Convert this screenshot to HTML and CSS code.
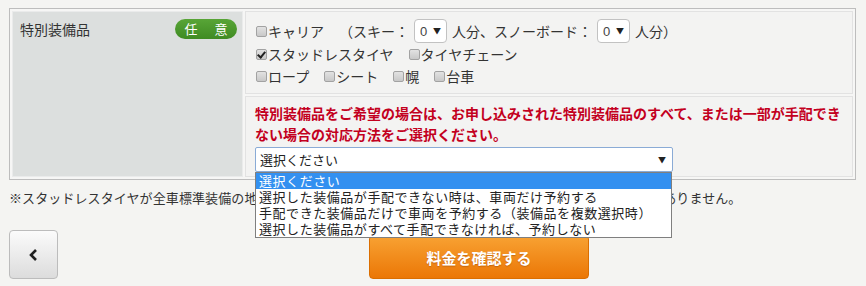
FILE: index.html
```html
<!DOCTYPE html>
<html lang="ja">
<head>
<meta charset="utf-8">
<title>特別装備品</title>
<link rel="stylesheet" href="styles.css">
</head>
<body>
<div class="page">
  <div class="form-table">
    <div class="th">
      <span class="th-label">特別装備品</span>
      <span class="badge">任　意</span>
    </div>
    <div class="td">
      <div class="cell cell-options">
        <div class="opt-row first">
          <label class="opt"><input type="checkbox">キャリア</label>
          <span class="txt">（スキー：</span>
          <span class="mini-select"><select><option>0</option><option>1</option><option>2</option></select><span class="arrow">▼</span></span>
          <span class="txt">人分、スノーボード：</span>
          <span class="mini-select"><select><option>0</option><option>1</option><option>2</option></select><span class="arrow">▼</span></span>
          <span class="txt">人分）</span>
        </div>
        <div class="opt-row">
          <label class="opt"><input type="checkbox" checked>スタッドレスタイヤ</label>
          <label class="opt"><input type="checkbox">タイヤチェーン</label>
        </div>
        <div class="opt-row">
          <label class="opt"><input type="checkbox">ロープ</label>
          <label class="opt"><input type="checkbox">シート</label>
          <label class="opt"><input type="checkbox">幌</label>
          <label class="opt"><input type="checkbox">台車</label>
        </div>
      </div>
      <div class="cell cell-note">
        <p class="warn">特別装備品をご希望の場合は、お申し込みされた特別装備品のすべて、または一部が手配できない場合の対応方法をご選択ください。</p>
        <div class="big-select">
          <select>
            <option>選択ください</option>
          </select>
          <span class="arrow big-arrow">▼</span>
          <ul class="listbox" role="listbox">
            <li class="selected">選択ください</li>
            <li>選択した装備品が手配できない時は、車両だけ予約する</li>
            <li>手配できた装備品だけで車両を予約する（装備品を複数選択時）</li>
            <li>選択した装備品がすべて手配できなければ、予約しない</li>
          </ul>
        </div>
      </div>
    </div>
  </div>
  <p class="footnote">※スタッドレスタイヤが全車標準装備の地域・期間中は、スタッドレスタイヤを別途お申し込みいただく必要はありません。</p>
  <div class="actions">
    <button class="btn-back" type="button" aria-label="戻る">
      <svg width="12" height="14" viewBox="0 0 12 14"><polyline points="8,2 3,7 8,12" fill="none" stroke="#222" stroke-width="2.6"/></svg>
    </button>
    <button class="btn-primary" type="button">料金を確認する</button>
  </div>
</div>
</body>
</html>
```

FILE: styles.css
```css
body {
  margin: 0;
  background: #f4f4f2;
  font-family: "Noto Sans CJK JP", sans-serif;
  color: #333;
}

.page {
  padding: 8px 10px 0 9px;
}

.form-table {
  display: grid;
  grid-template-columns: 231px 1fr;
  column-gap: 2px;
  border: 1px solid #bdbdbd;
  padding: 2px;
  background: #f6f6f5;
}

.th {
  background: #dcdfde;
  border: 1px solid #eaebeb;
  padding: 7px 5px 0 7px;
  display: flex;
  justify-content: space-between;
  align-items: flex-start;
}

.th-label {
  font-size: 14px;
  line-height: 20px;
  color: #333;
}

.badge {
  width: 62px;
  height: 20px;
  border-radius: 10px;
  background: linear-gradient(#58a537, #3f8b22);
  color: #fff;
  font-size: 13px;
  line-height: 20px;
  text-align: center;
  letter-spacing: 2px;
  text-indent: 2px;
}

.td {
  display: flex;
  flex-direction: column;
  gap: 2px;
}

.cell {
  background: #f3f3f2;
  border: 1px solid #e2e2e2;
}

.cell-options {
  padding: 7px 4px 6px 10px;
}

.opt-row {
  display: flex;
  align-items: center;
  height: 22px;
  font-size: 14px;
  white-space: nowrap;
  color: #333;
}

.opt-row.first {
  height: 24px;
}

.opt {
  display: inline-flex;
  align-items: center;
  margin-right: 15px;
}

.opt input {
  appearance: none;
  -webkit-appearance: none;
  width: 11px;
  height: 11px;
  margin: 0 1px 0 0;
  border: 1px solid #a2a2a2;
  border-radius: 2px;
  background: linear-gradient(#e2e2e2, #c8c8c8);
  position: relative;
  flex: none;
}

.opt input:checked::after {
  content: "";
  position: absolute;
  left: 2px;
  top: 0;
  width: 3px;
  height: 6px;
  border: solid #222;
  border-width: 0 2px 2px 0;
  transform: rotate(40deg);
}

.txt {
  margin-right: 5px;
}

.mini-select {
  position: relative;
  display: inline-block;
  margin-right: 5px;
}

.mini-select select {
  appearance: none;
  -webkit-appearance: none;
  display: block;
  width: 33px;
  height: 24px;
  border: 1px solid #c2c2c2;
  border-radius: 4px;
  background: #fff;
  font: 13px "Liberation Sans", sans-serif;
  color: #444;
  padding: 0 0 0 5px;
}

.arrow {
  position: absolute;
  font-size: 8px;
  line-height: 8px;
  color: #222;
  pointer-events: none;
}

.mini-select .arrow {
  right: 6px;
  top: 8px;
}

.cell-note {
  padding: 6px 4px 4px 9px;
}

.warn {
  margin: 0;
  font-size: 14px;
  font-weight: bold;
  line-height: 21px;
  color: #c3001e;
}

.big-select {
  position: relative;
  margin-top: 2px;
  width: 418px;
}

.big-select select {
  appearance: none;
  -webkit-appearance: none;
  display: block;
  width: 418px;
  height: 25px;
  border: 1px solid #8aabd6;
  border-radius: 2px;
  background: #fff;
  font: 13px "Noto Sans CJK JP", sans-serif;
  color: #222;
  padding: 0 0 0 4px;
}

.big-arrow {
  right: 7px;
  top: 9px;
}

.listbox {
  position: absolute;
  z-index: 10;
  left: 0;
  top: 100%;
  width: 417px;
  box-sizing: border-box;
  margin: 0;
  padding: 0;
  list-style: none;
  background: #fff;
  border: 1px solid #7f7f7f;
}

.listbox li {
  height: 16px;
  line-height: 16px;
  font-size: 13px;
  letter-spacing: 0.55px;
  padding-left: 3px;
  color: #222;
  white-space: nowrap;
}

.listbox li.selected {
  background: #3390f0;
  color: #fff;
}

.footnote {
  margin: 9px 0 0;
  font-size: 13px;
  line-height: 18px;
  letter-spacing: 0.1px;
  color: #333;
  white-space: nowrap;
}

.actions {
  display: flex;
  align-items: flex-end;
  margin-top: 23px;
}

.btn-back {
  width: 49px;
  height: 49px;
  padding: 0;
  border: 1px solid #bcbcbc;
  border-radius: 4px;
  background: linear-gradient(#fbfbfb, #dcdcdc);
  display: flex;
  align-items: center;
  justify-content: center;
}

.btn-primary {
  margin-left: 311px;
  width: 220px;
  height: 44px;
  border: 1px solid #db6e00;
  border-radius: 4px;
  background: linear-gradient(#f8a233, #eb7706);
  color: #fff;
  font: bold 15px "Noto Sans CJK JP", sans-serif;
  text-shadow: 0 1px 1px rgba(120, 50, 0, 0.35);
}
```
